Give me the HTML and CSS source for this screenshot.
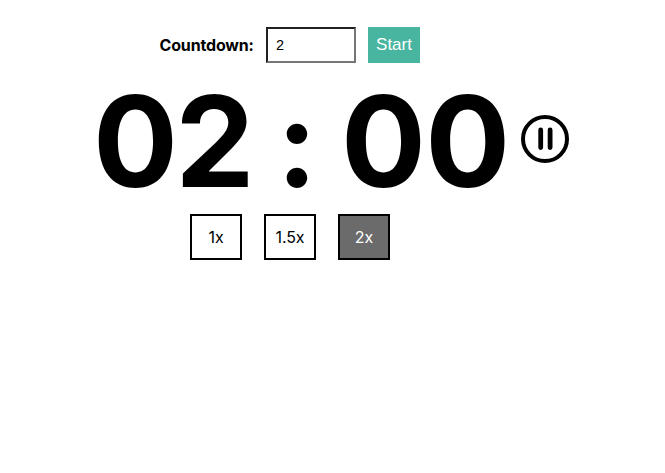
FILE: index.html
```html
<!DOCTYPE html>
<html lang="en">
<head>
<meta charset="utf-8">
<title>Countdown</title>
<link rel="stylesheet" href="styles.css">
</head>
<body>
<main class="app">
<form class="setup">
<label class="label" for="minutes">Countdown:</label>
<input class="minutes" id="minutes" type="text" value="2">
<button class="start" type="button">Start</button>
</form>
<section class="timer">
<div class="clock"><span class="digits mins">02</span><span class="colon">:</span><span class="digits">00</span></div>
<button class="pause" type="button" aria-label="Pause">
<svg viewBox="0 0 48 48" width="48" height="48"><circle cx="24" cy="24" r="22" fill="none" stroke="#000" stroke-width="4"/><path d="M19.7 14.9v17.7M29.1 14.9v17.7" stroke="#000" stroke-width="4.8" stroke-linecap="round"/></svg>
</button>
</section>
<div class="speeds">
<button class="speed" type="button">1x</button>
<button class="speed" type="button">1.5x</button>
<button class="speed active" type="button">2x</button>
</div>
</main>
</body>
</html>
```

FILE: styles.css
```css
* { box-sizing: border-box; }
body { margin: 0; background: #fff; color: #000; font-family: Inter, sans-serif; font-size: 16px; }
button { padding: 0; font: inherit; }
.app { padding-top: 27px; }
.setup { display: flex; align-items: center; height: 36px; padding-left: 159.5px; }
.label { width: 106.5px; font-weight: 700; letter-spacing: -0.16px; }
.minutes { width: 90px; height: 36px; padding: 0 8px; border: 2px inset #767676; border-radius: 0; font: 14.5px "Liberation Sans", sans-serif; }
.start { width: 52px; height: 36px; margin-left: 12px; border: 0; background: #48b5a0; color: #fff; font: 17px "Liberation Sans", sans-serif; }
.timer { display: flex; align-items: center; height: 151px; padding-left: 93px; }
.clock { display: flex; align-items: baseline; width: 428px; padding-top: 8px; font-size: 126px; font-weight: 700; line-height: 151px; }
.digits { width: 168px; letter-spacing: -0.8px; }
.mins { letter-spacing: -2.6px; }
.colon { width: 80px; padding-right: 8px; font-size: 121px; text-align: center; }
.pause { width: 48px; height: 48px; border: 0; background: none; }
.pause svg { display: block; }
.speeds { display: flex; gap: 22px; padding-left: 190px; }
.speed { width: 52px; height: 46px; border: 2px solid #000; background: #fff; color: #000; letter-spacing: -0.1px; }
.active { background: #6b6b6b; color: #fff; }
```
